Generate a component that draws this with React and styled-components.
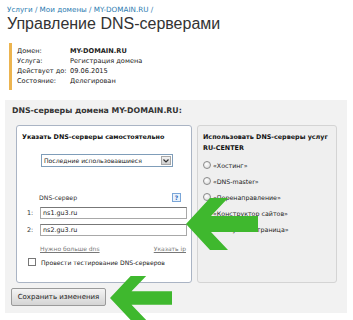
import React from 'react';
import styled, { createGlobalStyle } from 'styled-components';

const Global = createGlobalStyle`
  body {
    margin: 0;
    background: #fff;
    font-family: "DejaVu Sans", Verdana, sans-serif;
    color: #333;
  }
`;

const Page = styled.div`
  position: relative;
  width: 353px;
  height: 320px;
  overflow: hidden;
  padding: 5px 6px 0 5px;
  box-sizing: border-box;
`;

const Crumbs = styled.div`
  padding-left: 2px;
  font-size: 7.2px;
  line-height: 9px;
  color: #2b7bb0;
`;

const Title = styled.h1`
  margin: 1px 0 0 2px;
  font-family: "Liberation Sans", Arial, sans-serif;
  font-weight: normal;
  font-size: 16px;
  line-height: 18px;
  color: #333;
`;

const Info = styled.div`
  margin: 10px 0 0 4px;
  border-left: 3px solid #ecb44f;
  padding: 3px 0 4px 5px;
  display: grid;
  grid-template-columns: 53px auto;
  font-size: 6.6px;
  line-height: 10px;
  color: #222;
`;

const Value = styled.span`
  font-weight: ${p => (p.$bold ? 'bold' : 'normal')};
`;

const Panel = styled.div`
  margin-top: 10px;
  background: #f2f2f2;
  padding: 6px 10px 7px 6px;
  height: 213px;
  box-sizing: border-box;
`;

const PanelTitle = styled.div`
  padding-left: 1px;
  font-size: 7.8px;
  font-weight: bold;
  line-height: 10px;
  color: #333;
`;

const Columns = styled.div`
  display: flex;
  gap: 5px;
  margin: 9px 0 0 5px;
`;

const Box = styled.div`
  box-sizing: border-box;
  height: 158px;
  width: ${p => p.$w}px;
  border-radius: 3px;
  border: 1px solid ${p => (p.$alt ? '#d4d4d4' : '#aab4c4')};
  background: ${p => (p.$alt ? '#efefef' : '#fff')};
  padding: 6px 0 0 5px;
`;

const BoxTitle = styled.div`
  font-size: 6.4px;
  font-weight: bold;
  line-height: 11px;
  color: #111;
  white-space: nowrap;
`;

const Select = styled.div`
  margin: 11px 0 0 19px;
  width: 132px;
  height: 13px;
  box-sizing: border-box;
  border: 1px solid #7f9db9;
  display: flex;
  align-items: center;
  font-size: 6.1px;
  color: #222;
  padding-left: 2px;
  justify-content: space-between;
`;

const SelectArrow = styled.span`
  width: 10px;
  height: 9px;
  margin-right: 1px;
  background: linear-gradient(#f2f2f2, #cfcfcf);
  border: 1px solid #a8a8a8;
  box-sizing: border-box;
  display: flex;
  align-items: center;
  justify-content: center;
`;

const FieldHead = styled.div`
  display: flex;
  justify-content: space-between;
  align-items: center;
  margin: 26px 0 0 17px;
  width: 142px;
  font-size: 6.2px;
  color: #333;
`;

const Help = styled.span`
  width: 7px;
  height: 7px;
  border: 1px solid #7aa6d8;
  background: #eaf2fb;
  color: #2d6cc0;
  font-size: 6px;
  font-weight: bold;
  line-height: 7px;
  text-align: center;
`;

const Row = styled.div`
  display: flex;
  align-items: center;
  margin-top: 5px;
  font-size: 6.4px;
  color: #333;
`;

const Num = styled.span`
  width: 18px;
  padding-left: 5px;
  box-sizing: border-box;
`;

const Input = styled.div`
  width: 147px;
  height: 12px;
  box-sizing: border-box;
  border: 1px solid #a8a8a8;
  border-top-color: #777;
  font-size: 6.4px;
  line-height: 10px;
  padding-left: 2px;
  color: #222;
`;

const Links = styled.div`
  display: flex;
  justify-content: space-between;
  width: 146px;
  margin: 9px 0 0 18px;
  font-size: 6px;
  color: #777;
`;

const Link = styled.a`
  color: #777;
  text-decoration: underline;
`;

const Check = styled.label`
  display: flex;
  align-items: center;
  margin: 6px 0 0 6px;
  font-size: 6.1px;
  color: #222;
  gap: 5px;
`;

const CheckBox = styled.span`
  width: 8px;
  height: 8px;
  border: 1px solid #777;
  background: #fff;
  box-sizing: border-box;
`;

const RadioRow = styled.div`
  display: flex;
  align-items: center;
  gap: 2px;
  height: 16px;
  font-size: 6.3px;
  color: #222;
`;

const Radio = styled.span`
  width: 8px;
  height: 8px;
  border-radius: 50%;
  border: 1px solid #8a8a8a;
  background: radial-gradient(circle at 40% 35%, #fff, #d6d6d6);
  box-sizing: border-box;
`;

const Radios = styled.div`
  margin-top: 3px;
`;

const SaveButton = styled.button`
  margin: 5px 0 0 0;
  height: 18px;
  width: 95px;
  padding: 0;
  font-family: "DejaVu Sans", Verdana, sans-serif;
  font-size: 7px;
  color: #222;
  border: 1px solid #9a9a9a;
  border-radius: 2px;
  background: linear-gradient(#f4f4f4, #d4d4d4);
`;

const Arrow = styled.svg`
  position: absolute;
  left: ${p => p.$x}px;
  top: ${p => p.$y}px;
`;

const GreenArrow = ({ x, y, w, h }) => (
  <Arrow $x={x} $y={y} width={w} height={h} viewBox="0 0 72 52" preserveAspectRatio="none">
    <polygon
      points="0,26 24,0 42,0 25,18 72,18 72,34 25,34 42,52 24,52"
      fill="#3fb82e"
    />
  </Arrow>
);

const servers = ['ns1.gu3.ru', 'ns2.gu3.ru'];
const services = ['«Хостинг»', '«DNS-master»', '«Перенаправление»', '«Конструктор сайтов»', '«Статусная страница»'];

export default function App() {
  return (
    <Page>
      <Global />
      <Crumbs>Услуги / Мои домены / MY-DOMAIN.RU /</Crumbs>
      <Title>Управление DNS-серверами</Title>
      <Info>
        <span>Домен:</span><Value $bold>MY-DOMAIN.RU</Value>
        <span>Услуга:</span><Value>Регистрация домена</Value>
        <span>Действует до:</span><Value>09.06.2015</Value>
        <span>Состояние:</span><Value>Делегирован</Value>
      </Info>
      <Panel>
        <PanelTitle>DNS-серверы домена MY-DOMAIN.RU:</PanelTitle>
        <Columns>
          <Box $w={176}>
            <BoxTitle>Указать DNS-серверы самостоятельно</BoxTitle>
            <Select>
              Последние использовавшиеся
              <SelectArrow>
                <svg width="6" height="4" viewBox="0 0 6 4">
                  <path d="M0.5 0.5 L3 3 L5.5 0.5" stroke="#333" strokeWidth="1.2" fill="none" />
                </svg>
              </SelectArrow>
            </Select>
            <FieldHead>DNS-сервер<Help>?</Help></FieldHead>
            {servers.map((s, i) => (
              <Row key={s}>
                <Num>{i + 1}:</Num>
                <Input>{s}</Input>
              </Row>
            ))}
            <Links>
              <Link>Нужно больше dns</Link>
              <Link>Указать ip</Link>
            </Links>
            <Check>
              <CheckBox />
              Провести тестирование DNS-серверов
            </Check>
          </Box>
          <Box $w={140} $alt>
            <BoxTitle>Использовать DNS-серверы услуг<br />RU-CENTER</BoxTitle>
            <Radios>
              {services.map(s => (
                <RadioRow key={s}><Radio />{s}</RadioRow>
              ))}
            </Radios>
          </Box>
        </Columns>
        <SaveButton>Сохранить изменения</SaveButton>
      </Panel>
      <GreenArrow x={186} y={198} w={72} h={52} />
      <GreenArrow x={110} y={276} w={62} h={44} />
    </Page>
  );
}
